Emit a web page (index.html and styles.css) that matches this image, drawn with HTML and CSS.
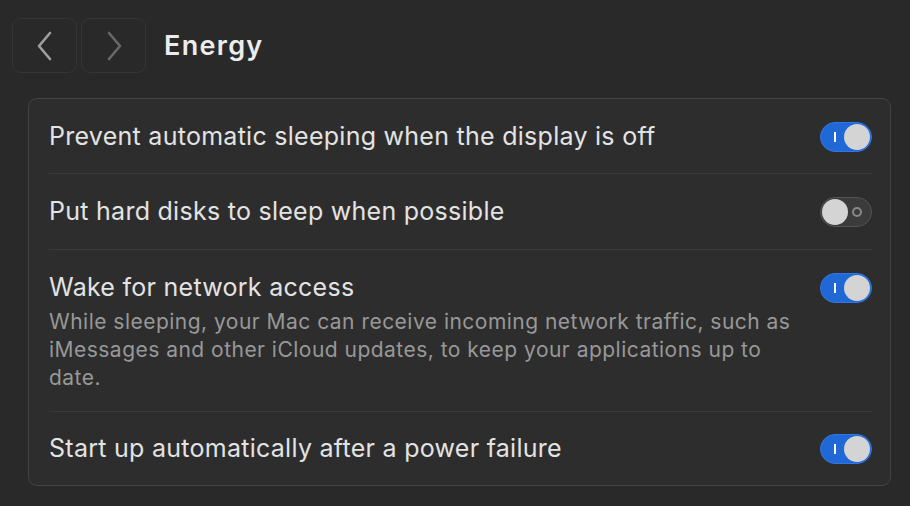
FILE: index.html
```html
<!DOCTYPE html>
<html lang="en">
<head>
    <meta charset="UTF-8" />
    <meta name="viewport" content="width=device-width, initial-scale=1.0" />
    <title>Energy</title>
    <link rel="stylesheet" href="styles.css">
</head>
<body>
    <div class="window">

        <!-- Toolbar -->
        <div class="toolbar">
            <div class="nav">
                <button class="nav-btn" aria-label="Back">
                    <svg width="20" height="30" viewBox="0 0 20 30">
                        <path d="M15 2 L4 15 L15 28" fill="none" stroke="#a0a0a0" stroke-width="2.6" stroke-linecap="round" stroke-linejoin="round" />
                    </svg>
                </button>
                <button class="nav-btn" aria-label="Forward" disabled>
                    <svg width="20" height="30" viewBox="0 0 20 30">
                        <path d="M5 2 L16 15 L5 28" fill="none" stroke="#686868" stroke-width="2.6" stroke-linecap="round" stroke-linejoin="round" />
                    </svg>
                </button>
            </div>
            <h1>Energy</h1>
        </div>

        <!-- Settings list -->
        <div class="card">
            <div class="row">
                <div class="row-text">
                    <div class="row-title">Prevent automatic sleeping when the display is off</div>
                </div>
                <span class="switch on"><span class="knob"></span></span>
            </div>
            <div class="row">
                <div class="row-text">
                    <div class="row-title">Put hard disks to sleep when possible</div>
                </div>
                <span class="switch"><span class="knob"></span></span>
            </div>
            <div class="row">
                <div class="row-text">
                    <div class="row-title">Wake for network access</div>
                    <div class="row-desc">While sleeping, your Mac can receive incoming network traffic, such as iMessages and other iCloud updates, to keep your applications up to date.</div>
                </div>
                <span class="switch on"><span class="knob"></span></span>
            </div>
            <div class="row">
                <div class="row-text">
                    <div class="row-title">Start up automatically after a power failure</div>
                </div>
                <span class="switch on"><span class="knob"></span></span>
            </div>
        </div>
    </div>
</body>
</html>
```

FILE: styles.css
```css
:root {
    --bg: #292929;
    --card: #2d2d2d;
    --border: #434343;
    --divider: #3a3a3a;
    --text: #e3e3e3;
    --muted: #989898;
    --blue: #1f68d6;
    --knob: #d4d4d4;
}

* {
    box-sizing: border-box;
}

body {
    margin: 0;
    background-color: var(--bg);
    color: var(--text);
    font-family: Inter, 'Noto Sans', sans-serif;
}

.window {
    padding: 18px 19px 0 12px;
}

.toolbar {
    display: flex;
    align-items: center;
    gap: 18px;
    height: 55px;
}

.nav {
    display: flex;
    gap: 4px;
}

.nav-btn {
    width: 65px;
    height: 55px;
    display: flex;
    align-items: center;
    justify-content: center;
    background: transparent;
    border: 1.5px solid #353535;
    border-radius: 9px;
    padding: 0;
}

h1 {
    margin: 0;
    font-size: 27px;
    font-weight: 600;
    color: #ececec;
    letter-spacing: 1.3px;
}

.card {
    margin: 25px 0 0 16px;
    background-color: var(--card);
    border: 1px solid var(--border);
    border-radius: 9px;
}

.row {
    display: flex;
    align-items: flex-start;
    margin: 0 18px 0 20px;
    padding: 21px 0;
}

.row + .row {
    border-top: 1px solid var(--divider);
}

.row:nth-child(2) {
    padding-bottom: 22px;
}

.row:nth-child(3) {
    padding-bottom: 19px;
}

.row:last-child {
    padding-top: 20px;
}

.row-text {
    flex: 1;
    padding-right: 20px;
}

.row-title {
    font-size: 25px;
    line-height: 32px;
    letter-spacing: 0.27px;
}

.row-desc {
    margin-top: 5px;
    font-size: 21px;
    line-height: 28px;
    color: var(--muted);
    letter-spacing: 0.48px;
}

/* Toggle switch */
.switch {
    position: relative;
    flex: none;
    width: 52px;
    height: 30px;
    margin-top: 2px;
    border-radius: 15px;
    background-color: #3b3b3b;
    border: 1px solid #555;
}

.switch .knob {
    position: absolute;
    top: 1px;
    left: 1px;
    width: 26px;
    height: 26px;
    border-radius: 50%;
    background-color: var(--knob);
}

.switch::after {
    content: '';
    position: absolute;
    right: 9px;
    top: 9px;
    width: 6px;
    height: 6px;
    border: 2px solid #8a8a8a;
    border-radius: 50%;
}

.switch.on {
    background-color: var(--blue);
    border-color: #2f78e2;
}

.switch.on .knob {
    left: auto;
    right: 1px;
}

.switch.on::after {
    border: none;
    border-radius: 0;
    left: 13px;
    right: auto;
    top: 9px;
    width: 2px;
    height: 10px;
    background-color: #fff;
}
```
